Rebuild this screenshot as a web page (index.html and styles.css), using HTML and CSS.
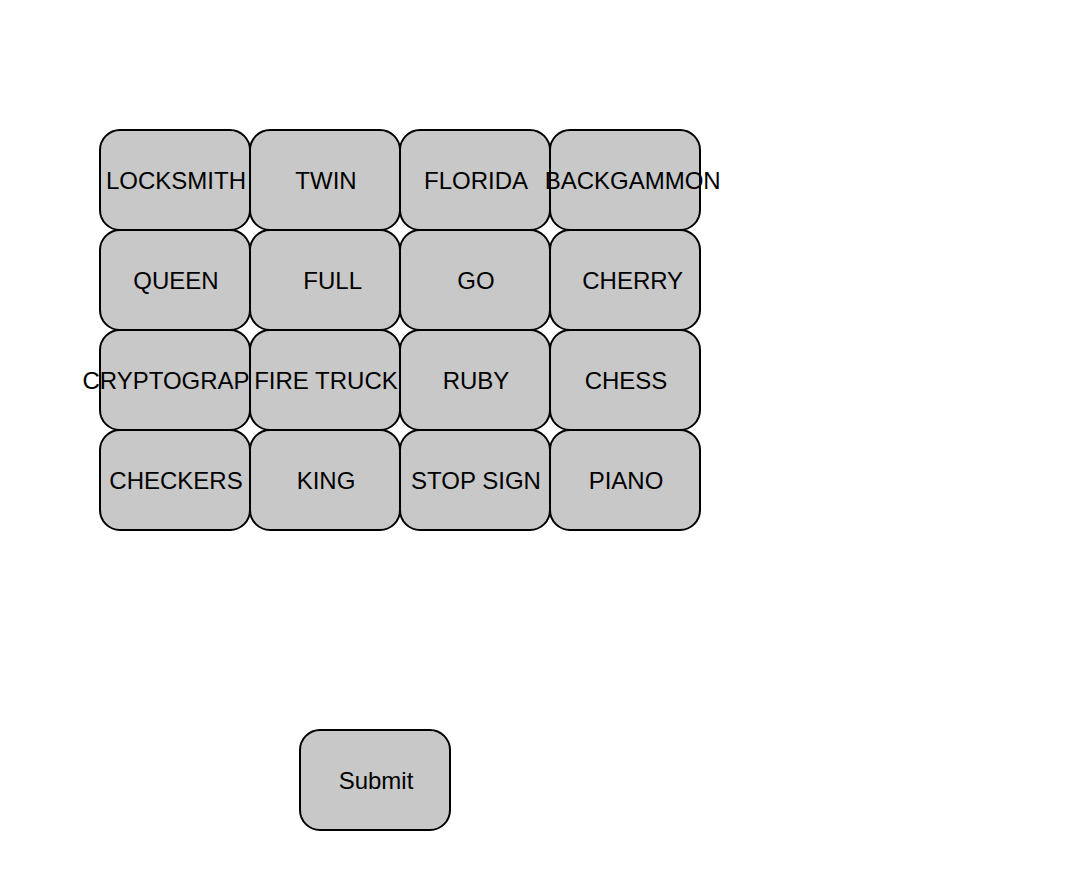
FILE: index.html
```html
<!DOCTYPE html>
<html lang="en">
<head>
<meta charset="utf-8">
<meta name="viewport" content="width=device-width, initial-scale=1">
<title>Word Groups</title>
<link rel="stylesheet" href="styles.css">
</head>
<body>
<main class="game">
  <div class="board">
    <button class="tile" type="button">LOCKSMITH</button>
    <button class="tile" type="button">TWIN</button>
    <button class="tile" type="button">FLORIDA</button>
    <button class="tile" type="button">  BACKGAMMON</button>
    <button class="tile" type="button">QUEEN</button>
    <button class="tile" type="button">  FULL</button>
    <button class="tile" type="button">GO</button>
    <button class="tile" type="button">  CHERRY</button>
    <button class="tile" type="button">  CRYPTOGRAPHY</button>
    <button class="tile" type="button">FIRE TRUCK</button>
    <button class="tile" type="button">RUBY</button>
    <button class="tile" type="button">CHESS</button>
    <button class="tile" type="button">CHECKERS</button>
    <button class="tile" type="button">KING</button>
    <button class="tile" type="button">STOP SIGN</button>
    <button class="tile" type="button">PIANO</button>
  </div>
  <div class="actions">
    <button class="tile" type="button">Submit</button>
  </div>
</main>
</body>
</html>
```
FILE: styles.css
```css
body {
  margin: 0;
  background: #fff;
}

.game {
  padding: 129px 99px 40px;
}

.board {
  display: grid;
  grid-template-columns: repeat(4, 150px);
  grid-auto-rows: 100px;
}

/* Each tile is one border wider than its cell, so neighbours share an edge. */
.tile {
  box-sizing: border-box;
  display: flex;
  align-items: center;
  justify-content: center;
  width: 152px;
  height: 102px;
  padding: 2px 0 0 2px;
  border: 2px solid #000;
  border-radius: 21px;
  background: #c8c8c8;
  color: #000;
  font: 24px/28px "Liberation Sans", Arial, sans-serif;
  white-space: pre;
  cursor: pointer;
}

.actions {
  display: flex;
  padding: 200px 200px 0;
}
```
